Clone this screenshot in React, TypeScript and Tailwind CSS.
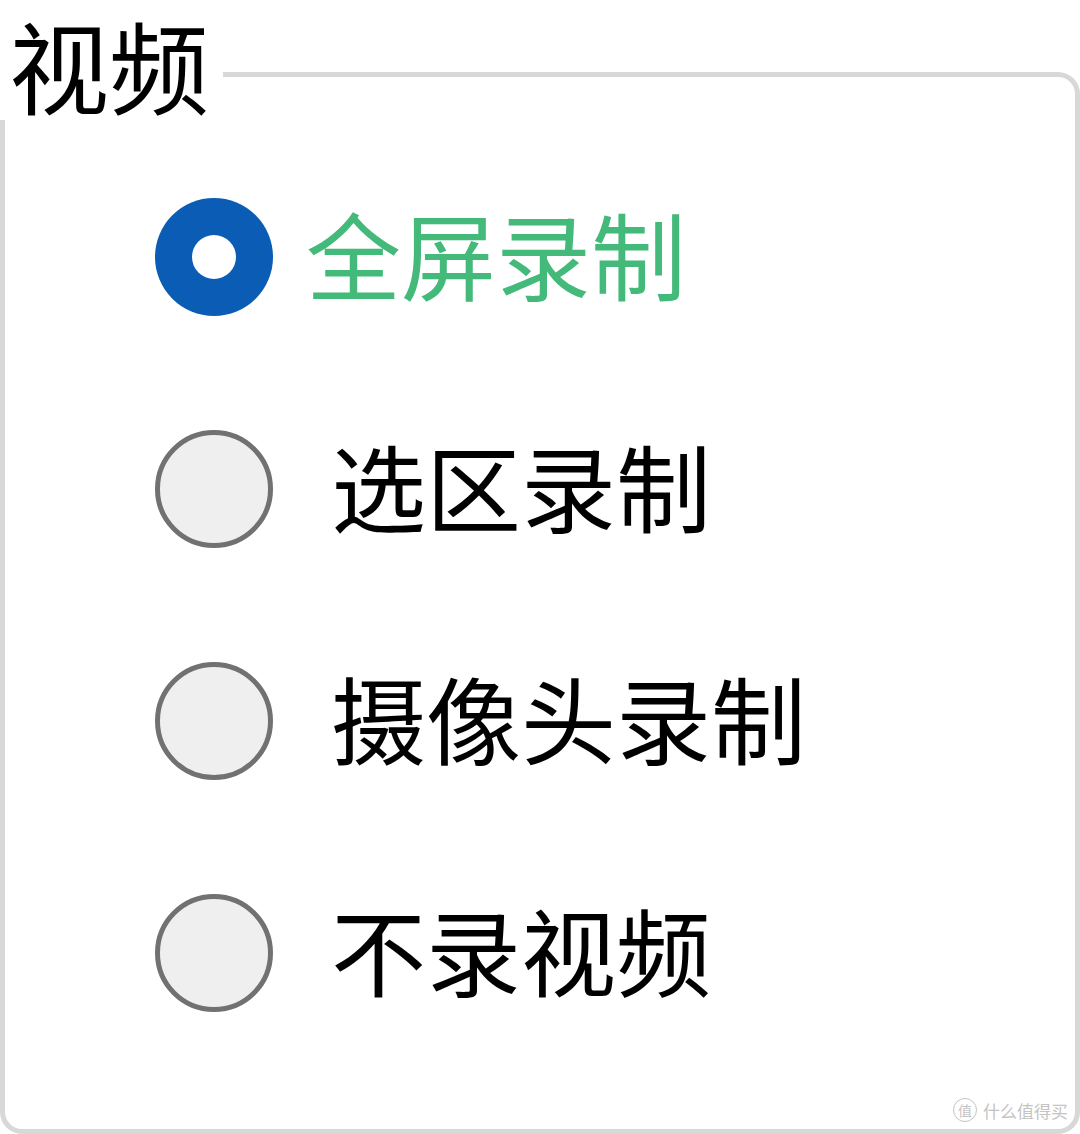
import React from "react"

const options = [
    { label: "全屏录制", checked: true },
    { label: "选区录制", checked: false },
    { label: "摄像头录制", checked: false },
    { label: "不录视频", checked: false },
]

const font = { fontFamily: '"Noto Sans CJK SC", "Noto Sans", sans-serif' }

const Radio = ({ checked }: { checked: boolean }) =>
    checked ? (
        <div className="w-[118px] h-[118px] rounded-full bg-[#0b5cb5] flex items-center justify-center shrink-0">
            <div className="w-[44px] h-[44px] rounded-full bg-white" />
        </div>
    ) : (
        <div className="w-[118px] h-[118px] rounded-full border-[5px] border-[#717171] bg-[#efefef] shrink-0" />
    )

export default function App() {
    return (
        <div className="relative w-[1080px] h-[1134px] bg-white overflow-hidden" style={font}>
            {/* group header: title, then the frame's top edge */}
            <div className="h-[120px] flex items-start">
                <span className="mt-[9px] pl-[9px] pr-[14px] text-[100px] leading-[110px] text-black shrink-0">
                    视频
                </span>
                <div className="flex-1 mt-[72px] h-[48px] border-t-[5px] border-r-[5px] border-[#d8d8d8] rounded-tr-[22px]" />
            </div>

            <div className="h-[1014px] border-l-[5px] border-r-[5px] border-b-[5px] border-[#d8d8d8] rounded-b-[22px] pt-[21px] pl-[150px]">
                {options.map((o) => (
                    <div key={o.label} className="h-[232px] flex items-center">
                        <Radio checked={o.checked} />
                        <span
                            className={
                                o.checked
                                    ? "ml-[33px] mb-[8px] text-[95px] leading-[1.15] text-[#43b97a]"
                                    : "ml-[58px] mb-[8px] text-[95px] leading-[1.15] text-black"
                            }
                        >
                            {o.label}
                        </span>
                    </div>
                ))}
            </div>

            <div className="absolute right-[12px] bottom-[12px] flex items-center gap-[6px] text-[#c4c4c4]">
                <span className="w-[24px] h-[24px] rounded-full border-[1.5px] border-[#c4c4c4] flex items-center justify-center text-[14px] leading-none">
                    值
                </span>
                <span className="text-[17px] leading-none">什么值得买</span>
            </div>
        </div>
    )
}
